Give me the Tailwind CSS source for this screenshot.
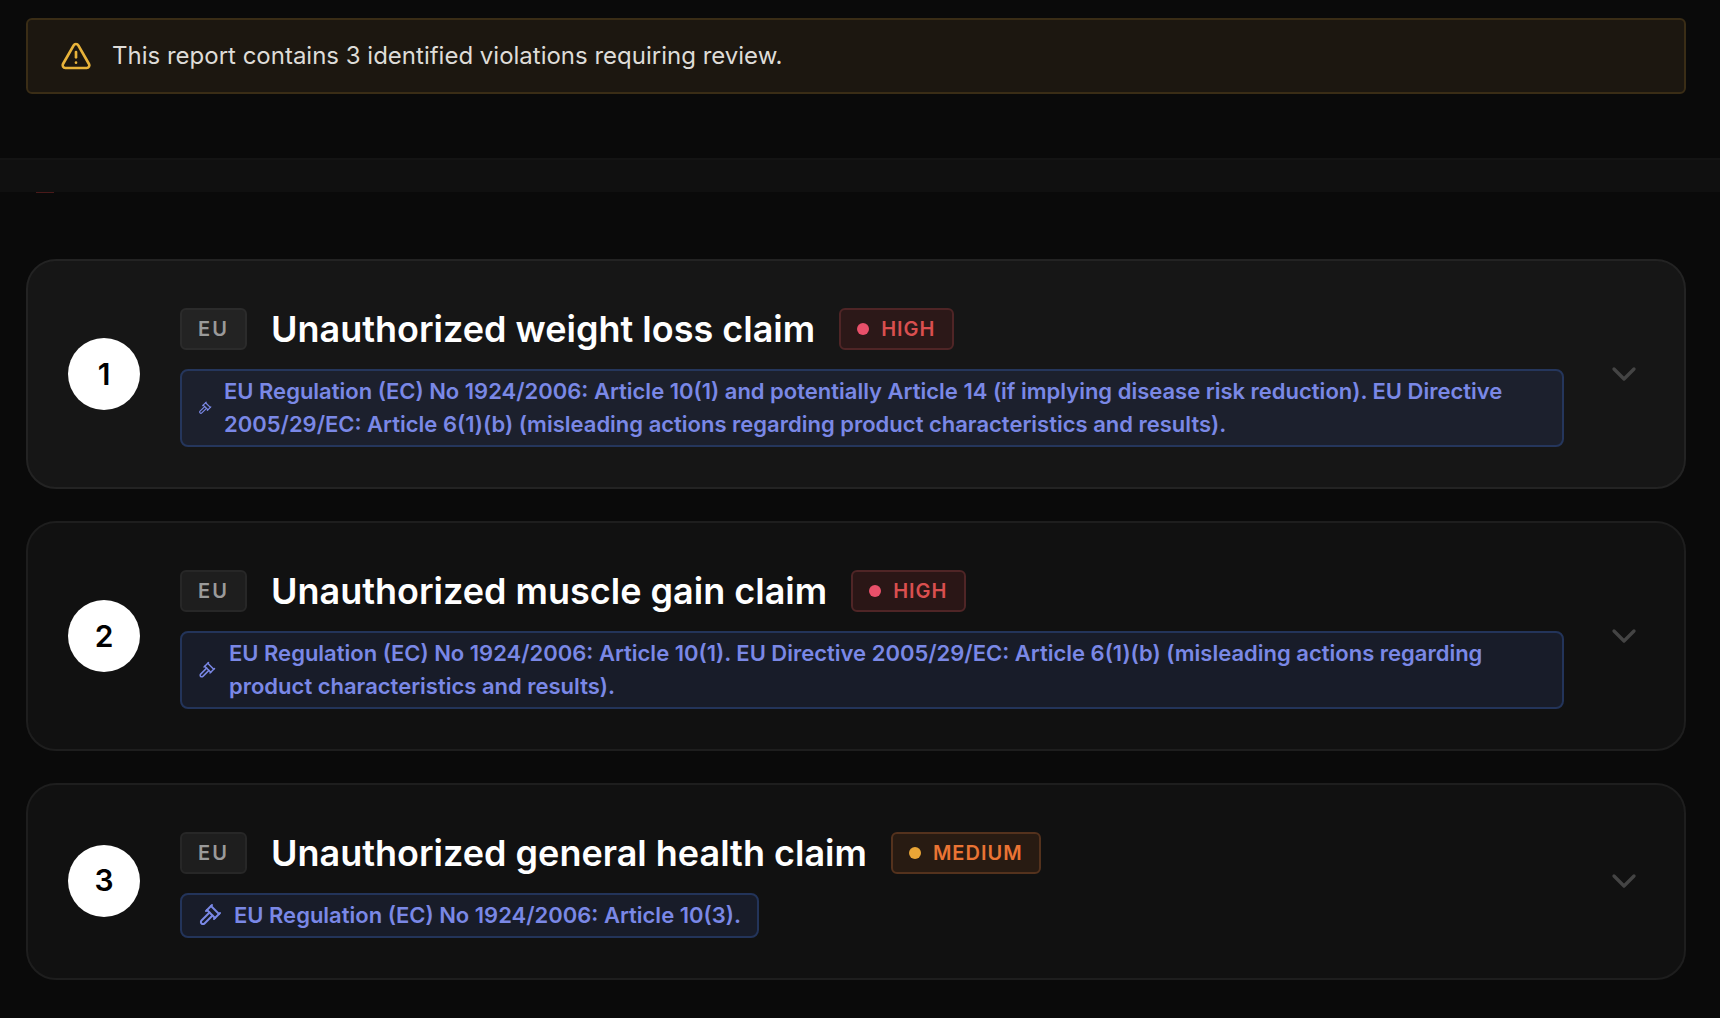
<!DOCTYPE html>
<html lang="en">
<head>
  <meta charset="UTF-8" />
  <title>Report</title>
  <script src="https://cdn.jsdelivr.net/npm/@tailwindcss/browser@4"></script>
</head>
<body class="bg-[#0a0a0a] font-['Inter',sans-serif] antialiased h-[1018px] overflow-hidden">
  <!-- Alert -->
  <div class="pl-[26px] pr-[34px] pt-[18px]">
    <div class="h-[76px] flex items-center gap-[20px] px-[32px] rounded-[6px] border-2 border-[#3a2d16] bg-[#1c1710]">
      <svg class="w-[32px] h-[32px] text-[#e8b33a]" viewBox="0 0 24 24" fill="none" stroke="currentColor" stroke-width="2" stroke-linecap="round" stroke-linejoin="round"><path d="m21.73 18-8-14a2 2 0 0 0-3.48 0l-8 14A2 2 0 0 0 4 21h16a2 2 0 0 0 1.73-3"/><path d="M12 9v4"/><path d="M12 17h.01"/></svg>
      <p class="text-[24px] text-[#dedcd8]">This report contains 3 identified violations requiring review.</p>
    </div>
  </div>

  <!-- Tabs strip -->
  <div class="mt-[64px] h-[34px] bg-[#101010] border-t-2 border-[#141414] relative">
    <div class="absolute left-[36px] top-[32px] w-[18px] h-px bg-[#4a1a1a]"></div>
  </div>

  <div class="pl-[26px] pr-[34px] pt-[67px] flex flex-col gap-[32px]">
    <!-- Violation 1 -->
    <div class="h-[230px] flex items-center rounded-[30px] border-2 border-[#232323] bg-[#161616] pl-[40px] pr-[40px]">
      <div class="w-[72px] h-[72px] shrink-0 rounded-full bg-white flex items-center justify-center text-[30px] font-semibold text-black">1</div>
      <div class="ml-[40px] mt-[6px] w-[1384px] flex flex-col gap-[19px]">
        <div class="flex items-center gap-[24px]">
          <span class="h-[42px] w-[67px] flex items-center justify-center rounded-[6px] border-2 border-[#2b2b2b] bg-[#232323] text-[20px] font-semibold tracking-[2px] text-[#9a9a9a]">EU</span>
          <h2 class="text-[36px] leading-[42px] font-semibold text-white">Unauthorized weight loss claim</h2>
          <span class="h-[42px] flex items-center gap-[12px] px-[16px] rounded-[6px] border-2 border-[#4f2526] bg-[#2c1818] text-[20px] font-semibold tracking-[1px] text-[#d94f4f]"><i class="w-[12px] h-[12px] rounded-full bg-[#e8506a]"></i>HIGH</span>
        </div>
        <div class="h-[78px] flex items-center gap-[12px] px-[16px] rounded-[8px] border-2 border-[#25365c] bg-[#1c202d] text-[22px] leading-[33px] font-semibold text-[#7a88e6]">
          <svg class="w-[14px] h-[14px] shrink-0" viewBox="0 0 24 24" fill="none" stroke="currentColor" stroke-width="2" stroke-linecap="round" stroke-linejoin="round"><path d="m14.5 12.5-8 8a2.119 2.119 0 1 1-3-3l8-8"/><path d="m16 16 6-6"/><path d="m8 8 6-6"/><path d="m9 7 8 8"/><path d="m21 11-8-8"/></svg>
          <p>EU Regulation (EC) No 1924/2006: Article 10(1) and potentially Article 14 (if implying disease risk reduction). EU Directive 2005/29/EC: Article 6(1)(b) (misleading actions regarding product characteristics and results).</p>
        </div>
      </div>
      <svg class="ml-auto w-[40px] h-[40px] text-[#444444]" viewBox="0 0 24 24" fill="none" stroke="currentColor" stroke-width="2" stroke-linecap="round" stroke-linejoin="round"><path d="m6 9 6 6 6-6"/></svg>
    </div>

    <!-- Violation 2 -->
    <div class="h-[230px] flex items-center rounded-[30px] border-2 border-[#1e1e1e] bg-[#111111] pl-[40px] pr-[40px]">
      <div class="w-[72px] h-[72px] shrink-0 rounded-full bg-white flex items-center justify-center text-[30px] font-semibold text-black">2</div>
      <div class="ml-[40px] mt-[6px] w-[1384px] flex flex-col gap-[19px]">
        <div class="flex items-center gap-[24px]">
          <span class="h-[42px] w-[67px] flex items-center justify-center rounded-[6px] border-2 border-[#272727] bg-[#1e1e1e] text-[20px] font-semibold tracking-[2px] text-[#9a9a9a]">EU</span>
          <h2 class="text-[36px] leading-[42px] font-semibold text-white">Unauthorized muscle gain claim</h2>
          <span class="h-[42px] flex items-center gap-[12px] px-[16px] rounded-[6px] border-2 border-[#4f2526] bg-[#2a1616] text-[20px] font-semibold tracking-[1px] text-[#d94f4f]"><i class="w-[12px] h-[12px] rounded-full bg-[#e8506a]"></i>HIGH</span>
        </div>
        <div class="h-[78px] flex items-center gap-[13px] px-[16px] rounded-[8px] border-2 border-[#23345a] bg-[#181c29] text-[22px] leading-[33px] font-semibold text-[#7a88e6]">
          <svg class="w-[18px] h-[18px] shrink-0" viewBox="0 0 24 24" fill="none" stroke="currentColor" stroke-width="2" stroke-linecap="round" stroke-linejoin="round"><path d="m14.5 12.5-8 8a2.119 2.119 0 1 1-3-3l8-8"/><path d="m16 16 6-6"/><path d="m8 8 6-6"/><path d="m9 7 8 8"/><path d="m21 11-8-8"/></svg>
          <p>EU Regulation (EC) No 1924/2006: Article 10(1). EU Directive 2005/29/EC: Article 6(1)(b) (misleading actions regarding product characteristics and results).</p>
        </div>
      </div>
      <svg class="ml-auto w-[40px] h-[40px] text-[#444444]" viewBox="0 0 24 24" fill="none" stroke="currentColor" stroke-width="2" stroke-linecap="round" stroke-linejoin="round"><path d="m6 9 6 6 6-6"/></svg>
    </div>

    <!-- Violation 3 -->
    <div class="h-[197px] flex items-center rounded-[30px] border-2 border-[#1e1e1e] bg-[#111111] pl-[40px] pr-[40px]">
      <div class="w-[72px] h-[72px] mb-[2px] shrink-0 rounded-full bg-white flex items-center justify-center text-[30px] font-semibold text-black">3</div>
      <div class="ml-[40px] mt-[6px] w-[1384px] flex flex-col items-start gap-[19px]">
        <div class="flex items-center gap-[24px]">
          <span class="h-[42px] w-[67px] flex items-center justify-center rounded-[6px] border-2 border-[#272727] bg-[#1e1e1e] text-[20px] font-semibold tracking-[2px] text-[#9a9a9a]">EU</span>
          <h2 class="text-[36px] leading-[42px] font-semibold text-white">Unauthorized general health claim</h2>
          <span class="h-[42px] flex items-center gap-[12px] px-[16px] rounded-[6px] border-2 border-[#54321d] bg-[#281b12] text-[20px] font-semibold tracking-[1px] text-[#ea7434]"><i class="w-[12px] h-[12px] rounded-full bg-[#eaa536]"></i>MEDIUM</span>
        </div>
        <div class="h-[45px] flex items-center gap-[12px] px-[16px] rounded-[8px] border-2 border-[#23345a] bg-[#181c29] text-[22px] leading-[33px] font-semibold text-[#7a88e6]">
          <svg class="w-[24px] h-[24px] shrink-0" viewBox="0 0 24 24" fill="none" stroke="currentColor" stroke-width="2" stroke-linecap="round" stroke-linejoin="round"><path d="m14.5 12.5-8 8a2.119 2.119 0 1 1-3-3l8-8"/><path d="m16 16 6-6"/><path d="m8 8 6-6"/><path d="m9 7 8 8"/><path d="m21 11-8-8"/></svg>
          <p>EU Regulation (EC) No 1924/2006: Article 10(3).</p>
        </div>
      </div>
      <svg class="ml-auto mb-[2px] w-[40px] h-[40px] text-[#444444]" viewBox="0 0 24 24" fill="none" stroke="currentColor" stroke-width="2" stroke-linecap="round" stroke-linejoin="round"><path d="m6 9 6 6 6-6"/></svg>
    </div>
  </div>
</body>
</html>
